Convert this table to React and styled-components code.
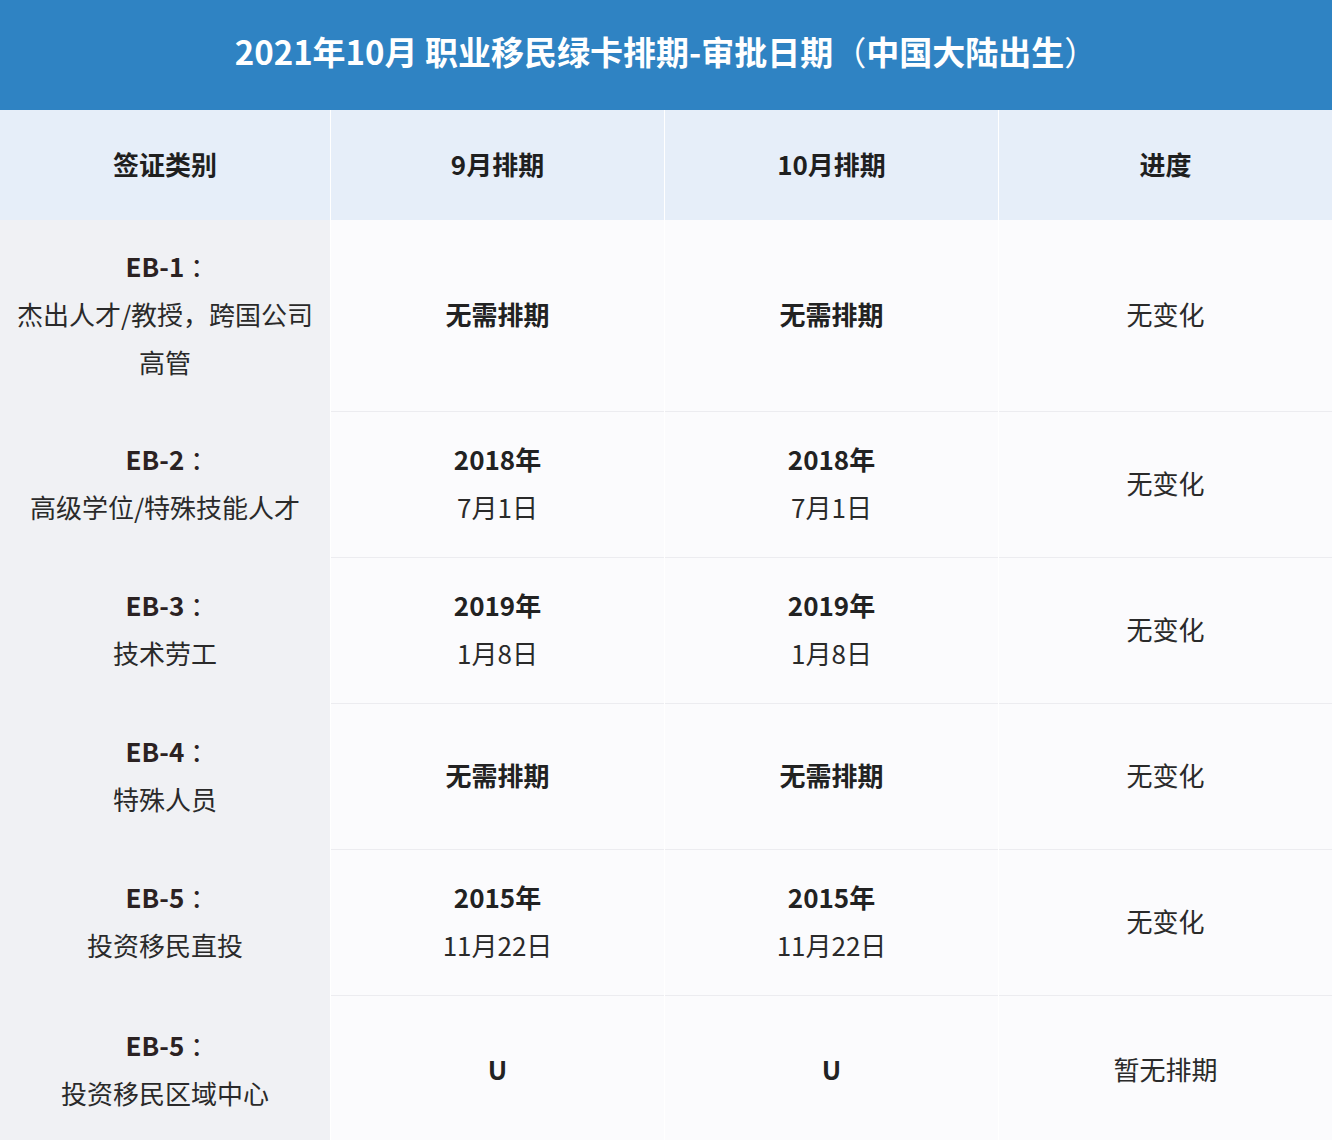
import React from "react";
import styled, { createGlobalStyle } from "styled-components";

const GlobalStyle = createGlobalStyle`
  body {
    margin: 0;
    background: #ffffff;
    font-family: "Noto Sans CJK SC", "Noto Sans", sans-serif;
  }
`;

const rows = [
  {
    code: "EB-1",
    name: ["杰出人才/教授，跨国公司", "高管"],
    sep: { bold: "无需排期" },
    oct: { bold: "无需排期" },
    progress: "无变化",
    height: 192,
  },
  {
    code: "EB-2",
    name: ["高级学位/特殊技能人才"],
    sep: { bold: "2018年", plain: "7月1日" },
    oct: { bold: "2018年", plain: "7月1日" },
    progress: "无变化",
    height: 146,
  },
  {
    code: "EB-3",
    name: ["技术劳工"],
    sep: { bold: "2019年", plain: "1月8日" },
    oct: { bold: "2019年", plain: "1月8日" },
    progress: "无变化",
    height: 146,
  },
  {
    code: "EB-4",
    name: ["特殊人员"],
    sep: { bold: "无需排期" },
    oct: { bold: "无需排期" },
    progress: "无变化",
    height: 146,
  },
  {
    code: "EB-5",
    name: ["投资移民直投"],
    sep: { bold: "2015年", plain: "11月22日" },
    oct: { bold: "2015年", plain: "11月22日" },
    progress: "无变化",
    height: 146,
  },
  {
    code: "EB-5",
    name: ["投资移民区域中心"],
    sep: { bold: "U" },
    oct: { bold: "U" },
    progress: "暂无排期",
    height: 150,
  },
];

function DateCell({ value }) {
  return (
    <DataCell>
      <Strong>{value.bold}</Strong>
      {value.plain && <Plain>{value.plain}</Plain>}
    </DataCell>
  );
}

export default function App() {
  return (
    <>
      <GlobalStyle />
      <Wrapper>
        <Title>
          2021年10月 职业移民绿卡排期-审批日期<Paren>（</Paren>中国大陆出生<Paren>）</Paren>
        </Title>
        <Table>
          <HeadCell>签证类别</HeadCell>
          <HeadCell>9月排期</HeadCell>
          <HeadCell>10月排期</HeadCell>
          <HeadCell>进度</HeadCell>
          {rows.map((r, i) => (
            <Row key={i} $h={r.height} $last={i === rows.length - 1}>
              <TypeCell>
                <Code>
                  {r.code}
                  <Colon>：</Colon>
                </Code>
                {r.name.map((n) => (
                  <Plain key={n}>{n}</Plain>
                ))}
              </TypeCell>
              <DateCell value={r.sep} />
              <DateCell value={r.oct} />
              <DataCell>
                <Plain>{r.progress}</Plain>
              </DataCell>
            </Row>
          ))}
        </Table>
      </Wrapper>
    </>
  );
}

const Wrapper = styled.div`
  width: 1332px;
  height: 1140px;
  overflow: hidden;
`;

const Title = styled.div`
  height: 110px;
  display: flex;
  align-items: center;
  justify-content: center;
  padding-bottom: 8px;
  box-sizing: border-box;
  background: #2f83c3;
  color: #ffffff;
  font-size: 33px;
  font-weight: bold;
`;

const Paren = styled.span`
  display: inline-block;
  width: 1em;
  text-align: center;
  font-weight: normal;
`;

const Table = styled.div`
  display: grid;
  grid-template-columns: 330px 333px 333px 333px;
  column-gap: 1px;
  background: #ffffff;
`;

const HeadCell = styled.div`
  height: 110px;
  display: flex;
  align-items: center;
  justify-content: center;
  padding-bottom: 4px;
  box-sizing: border-box;
  background: #e6eef9;
  color: #1f1f1f;
  font-size: 26px;
  font-weight: bold;
`;

const Row = styled.div`
  display: contents;

  & > div {
    height: ${(p) => p.$h}px;
  }
  & > div:not(:first-child) {
    border-bottom: ${(p) => (p.$last ? "none" : "1px solid #ececf0")};
  }
`;

const TypeCell = styled.div`
  box-sizing: border-box;
  display: flex;
  flex-direction: column;
  align-items: center;
  justify-content: center;
  padding-bottom: 4px;
  background: #f0f1f4;
  color: #2a2a2a;
`;

const DataCell = styled.div`
  box-sizing: border-box;
  display: flex;
  flex-direction: column;
  align-items: center;
  justify-content: center;
  padding-bottom: 4px;
  background: #fbfbfd;
  color: #222222;
`;

const Code = styled.div`
  font-size: 26px;
  line-height: 48px;
  font-weight: bold;
  color: #2b2222;
  padding-left: 4px;
`;

const Colon = styled.span`
  display: inline-block;
  margin-left: 6px;
  width: 0.7em;
  text-align: center;
  font-weight: normal;
`;

const Strong = styled.div`
  font-size: 26px;
  line-height: 48px;
  font-weight: bold;
  color: #222222;
`;

const Plain = styled.div`
  font-size: 26px;
  line-height: 48px;
  color: #2a2a2a;
`;
